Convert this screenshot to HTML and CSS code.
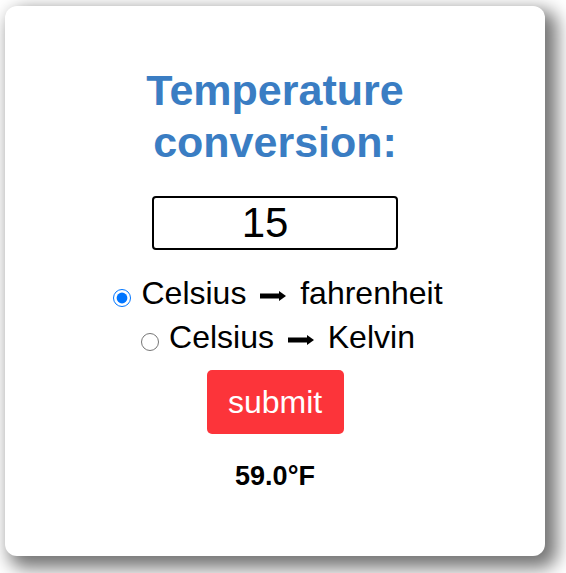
FILE: index.html
```html
<!DOCTYPE html>
<html>
<head>
<meta charset="utf-8">
<link rel="stylesheet" href="styles.css">
</head>
<body>
<div class="card">
  <h1 class="title">Temperature<br>conversion:</h1>
  <input class="temp-input" type="text" value="15">
  <div class="option"><input class="radio" type="radio" name="conv" checked>Celsius <svg class="arrow" width="26" height="10" viewBox="0 0 26 10"><rect x="0" y="2.5" width="20" height="5" fill="#000"/><polygon points="19,0 26,5 19,10" fill="#000"/></svg> fahrenheit</div>
  <div class="option"><input class="radio" type="radio" name="conv">Celsius <svg class="arrow" width="26" height="10" viewBox="0 0 26 10"><rect x="0" y="2.5" width="20" height="5" fill="#000"/><polygon points="19,0 26,5 19,10" fill="#000"/></svg> Kelvin</div>
  <button class="submit">submit</button>
  <div class="result">59.0°F</div>
</div>
</body>
</html>
```
FILE: styles.css
```css
html, body {
  margin: 0;
  padding: 0;
  background: #ffffff;
}
body {
  font-family: "Liberation Sans", Arial, sans-serif;
  width: 566px;
  height: 573px;
  overflow: hidden;
}
.card {
  box-sizing: border-box;
  margin: 6px 0 0 5px;
  width: 540px;
  height: 550px;
  background: #ffffff;
  border-radius: 12px;
  box-shadow: 8px 8px 18px 4px rgba(0, 0, 0, 0.55);
  padding-top: 58px;
  display: flex;
  flex-direction: column;
  align-items: center;
}
.title {
  margin: 0;
  font-size: 43px;
  line-height: 52px;
  font-weight: bold;
  color: #3a7dc3;
  text-align: center;
}
.temp-input {
  box-sizing: border-box;
  margin-top: 28px;
  width: 246px;
  height: 54px;
  border: 2px solid #000;
  border-radius: 4px;
  padding: 0 20px 0 0;
  font-family: "Liberation Sans", Arial, sans-serif;
  font-size: 42px;
  text-align: center;
  color: #000;
  outline: none;
}
.option {
  font-size: 32px;
  line-height: 44px;
  color: #000;
  white-space: nowrap;
  padding-left: 6px;
}
.temp-input + .option {
  margin-top: 21px;
}
.radio {
  width: 18px;
  height: 18px;
  margin: 0 10px 0 0;
  vertical-align: -3px;
}
.arrow {
  vertical-align: 3px;
  margin: 0 5px;
}
.submit {
  margin-top: 11px;
  width: 137px;
  height: 64px;
  border: none;
  border-radius: 5px;
  background: #fc343a;
  color: #ffffff;
  font-family: "Liberation Sans", Arial, sans-serif;
  font-size: 32px;
  padding: 0;
}
.result {
  margin-top: 26px;
  font-size: 27px;
  line-height: 32px;
  font-weight: bold;
  color: #000;
}
```
